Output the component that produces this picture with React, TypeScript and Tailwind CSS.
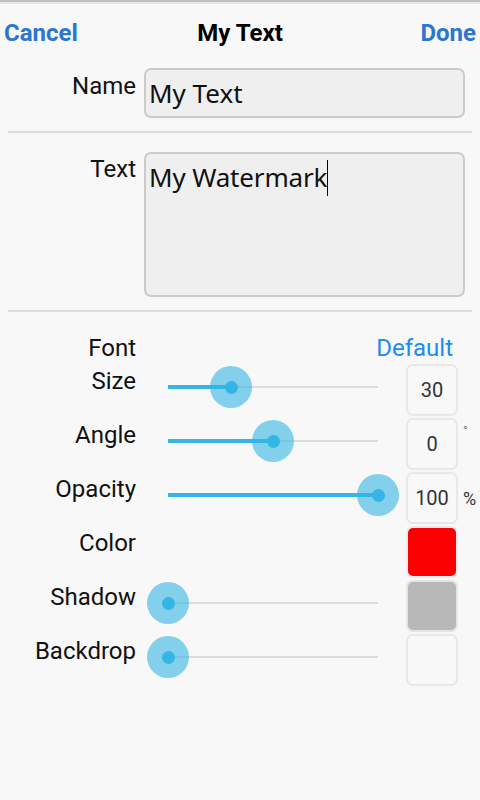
import React from "react";

const roboto = { fontFamily: "Roboto, 'Liberation Sans', sans-serif" };

function Slider({ value }: { value: number }) {
  return (
    <div className="relative w-[258px] h-[46px] shrink-0">
      <div className="absolute left-[24px] right-[24px] top-[22px] h-[2px] bg-[#dcdcdc]" />
      <div
        className="absolute left-[24px] top-[21px] h-[4px] bg-[#33b5e5]"
        style={{ width: `${value * 210}px` }}
      />
      <div
        className="absolute top-[2px] w-[42px] h-[42px] rounded-full bg-[rgba(51,181,229,0.6)] flex items-center justify-center"
        style={{ left: `${24 + value * 210 - 21}px` }}
      >
        <div className="w-[13px] h-[13px] rounded-full bg-[#33b5e5]" />
      </div>
    </div>
  );
}

function Row({
  label,
  slider,
  box,
  suffix,
}: {
  label: string;
  slider?: number;
  box: React.ReactNode;
  suffix?: React.ReactNode;
}) {
  return (
    <div className="flex items-start h-[52px]">
      <div className="w-[136px] text-right text-[24px] leading-[28px] pt-[3px] text-[#111]">{label}</div>
      <div className="ml-[8px] w-[258px]">{slider !== undefined ? <Slider value={slider} /> : null}</div>
      <div className="ml-[4px]">{box}</div>
      <div className="w-[22px] pl-[5px]">{suffix}</div>
    </div>
  );
}

function ValueBox({ v }: { v: string }) {
  return (
    <div className="w-[52px] h-[52px] rounded-[7px] border-2 border-[#e8e8e8] bg-[#f8f8f8] flex items-center justify-center text-[20px] text-[#333]">
      {v}
    </div>
  );
}

function ColorBox({ c, b }: { c: string; b: string }) {
  return <div className={`w-[52px] h-[52px] rounded-[7px] border-2 ${b} ${c}`} />;
}

export default function App() {
  return (
    <div className="w-[480px] h-[800px] bg-[#f8f8f8] overflow-hidden" style={roboto}>
      <div className="h-[2px] bg-[#c2c2c2]" />
      <div className="h-[2px] bg-[#e6e6e6]" />
      <div className="grid grid-cols-[1fr_auto_1fr] items-center pt-[16px] px-[4px] text-[24px] leading-[27px] font-bold">
        <div className="text-[#2b76cf]">Cancel</div>
        <div className="text-black">My Text</div>
        <div className="text-right text-[#2b76cf]">Done</div>
      </div>

      <div className="flex items-start mt-[21px]">
        <div className="w-[136px] text-right text-[24px] leading-[28px] pt-[4px] text-[#111]">Name</div>
        <div
          className="ml-[8px] w-[321px] h-[50px] rounded-[7px] border-2 border-[#cbcbcb] bg-[#efefef] pl-[3px] pt-[5px] text-[26px] leading-[36px] text-[#111]"
          style={{ fontFamily: "'Noto Sans', 'Open Sans', sans-serif" }}
        >
          My Text
        </div>
      </div>

      <div className="mx-[8px] mt-[13px] h-[2px] bg-[#dddddd]" />

      <div className="flex items-start mt-[19px]">
        <div className="w-[136px] text-right text-[24px] leading-[28px] pt-[3px] text-[#111]">Text</div>
        <div
          className="ml-[8px] w-[321px] h-[145px] rounded-[7px] border-2 border-[#cbcbcb] bg-[#efefef] pl-[3px] pt-[5px] text-[26px] leading-[36px] text-[#111] flex items-start"
          style={{ fontFamily: "'Noto Sans', 'Open Sans', sans-serif" }}
        >
          <span className="tracking-[-0.15px]">My Watermark</span>
          <span className="inline-block w-[1px] h-[36px] bg-black mt-[1px]" />
        </div>
      </div>

      <div className="mx-[8px] mt-[13px] h-[2px] bg-[#dddddd]" />

      <div className="flex items-start mt-[22px] h-[28px]">
        <div className="w-[136px] text-right text-[24px] leading-[28px] text-[#111]">Font</div>
        <div className="ml-[8px] w-[258px]" />
        <div className="ml-[4px] w-[52px] flex justify-end">
          <span className="text-[24px] leading-[28px] text-[#1b8cf2] whitespace-nowrap mr-[5px]">Default</span>
        </div>
      </div>

      <div className="flex flex-col gap-[2px] mt-[2px]">
        <Row label="Size" slider={0.3} box={<ValueBox v="30" />} />
        <Row
          label="Angle"
          slider={0.5}
          box={<ValueBox v="0" />}
          suffix={<div className="text-[13px] leading-[13px] text-[#777] pt-[6px]">°</div>}
        />
        <Row
          label="Opacity"
          slider={1}
          box={<ValueBox v="100" />}
          suffix={<div className="text-[18px] leading-[22px] text-[#333] pt-[16px]">%</div>}
        />
        <Row label="Color" box={<ColorBox c="bg-[#fa0000]" b="border-[#ececec]" />} />
        <Row label="Shadow" slider={0} box={<ColorBox c="bg-[#b8b8b8]" b="border-[#e4e4e4]" />} />
        <Row label="Backdrop" slider={0} box={<ColorBox c="bg-[#f8f8f8]" b="border-[#e8e8e8]" />} />
      </div>
    </div>
  );
}
